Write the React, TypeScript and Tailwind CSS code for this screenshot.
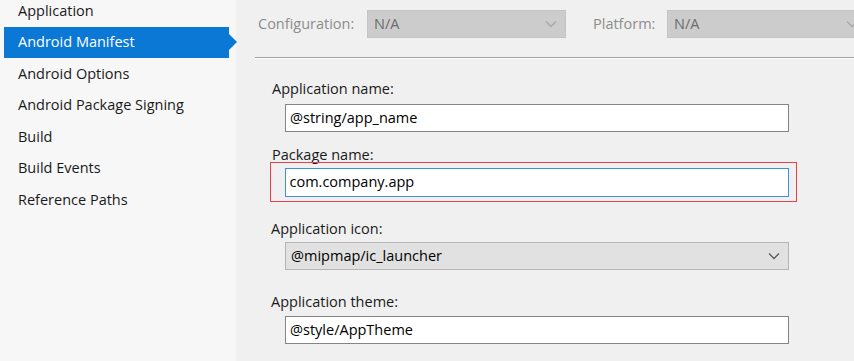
import React from "react";

const font = { fontFamily: '"Open Sans", "Noto Sans", sans-serif' };

function Chevron({ color }: { color: string }) {
  return (
    <svg width="12" height="8" viewBox="0 0 12 8" className="shrink-0">
      <path d="M1 1.5 L6 6.5 L11 1.5" fill="none" stroke={color} strokeWidth="1.3" />
    </svg>
  );
}

const items = [
  "Application",
  "Android Manifest",
  "Android Options",
  "Android Package Signing",
  "Build",
  "Build Events",
  "Reference Paths",
];

export default function App() {
  return (
    <div
      className="flex w-[854px] h-[361px] overflow-hidden bg-[#f0f0f0] text-[14.5px] text-[#1a1a1a]"
      style={font}
    >
      {/* Sidebar */}
      <div className="w-[236px] shrink-0 bg-[#f7f7f7] flex flex-col">
        <div className="-mt-[5px] flex flex-col">
          {items.map((it, i) =>
            i === 1 ? (
              <div key={it} className="relative h-[31.5px] ml-[4px] w-[225px]">
                <div className="h-full bg-[#0a78d4] text-white flex items-center pl-[14px]">
                  {it}
                </div>
                <div className="absolute right-[-8px] top-1/2 -translate-y-1/2 w-0 h-0 border-y-[8px] border-y-transparent border-l-[8px] border-l-[#0a78d4]" />
              </div>
            ) : (
              <div key={it} className="h-[31.5px] flex items-center pl-[18px]">
                {it}
              </div>
            )
          )}
        </div>
      </div>

      {/* Main panel */}
      <div className="flex-1 min-w-0 flex flex-col">
        <div className="pt-[10px] pl-[22px] flex items-center">
          <div className="w-[109px] shrink-0 text-[#8d8d8d]">Configuration:</div>
          <div className="w-[199px] h-[28px] shrink-0 bg-[#cccccc] border border-[#c4c4c4] flex items-center justify-between pl-[6px] pr-[8px] text-[#6d6d6d]">
            <span>N/A</span>
            <Chevron color="#a8a8a8" />
          </div>
          <div className="ml-[27px] w-[74px] shrink-0 text-[#8d8d8d]">Platform:</div>
          <div className="w-[200px] h-[28px] shrink-0 bg-[#cccccc] border border-[#c4c4c4] flex items-center justify-between pl-[6px] pr-[8px] text-[#6d6d6d]">
            <span>N/A</span>
            <Chevron color="#a8a8a8" />
          </div>
        </div>
        <div className="mt-[19px] ml-[19px] border-t border-t-[#a0a0a0] border-b border-b-[#ffffff]" />

        <div className="flex flex-col">
          <div className="mt-[20px] ml-[36px] h-[20px] leading-[20px]">Application name:</div>
          <div className="mt-[5px] ml-[49px] w-[504px] h-[28px] bg-white border-[1.5px] border-[#858585] flex items-center pl-[4px] text-black">
            @string/app_name
          </div>

          <div className="mt-[13px] ml-[36px] h-[17px] leading-[20px]">Package name:</div>
          <div className="ml-[34px] w-[527px] h-[40px] border-[1.5px] border-[#e8414b] pt-[4.5px] pl-[13.5px]">
            <div className="w-[504px] h-[29px] bg-white border-[1.5px] border-[#3d8fe0] flex items-center pl-[4px] text-black">
              com.company.app
            </div>
          </div>

          <div className="mt-[17px] ml-[35px] h-[20px] leading-[20px]">Application icon:</div>
          <div className="mt-[3px] ml-[49px] w-[504px] h-[28px] bg-[#e1e1e1] border-[1.5px] border-[#b4b4b4] flex items-center justify-between pl-[5px] pr-[8px] text-black">
            <span>@mipmap/ic_launcher</span>
            <Chevron color="#5a5a5a" />
          </div>

          <div className="mt-[22px] ml-[35px] h-[20px] leading-[20px]">Application theme:</div>
          <div className="mt-[4px] ml-[49px] w-[504px] h-[28px] bg-white border-[1.5px] border-[#858585] flex items-center pl-[4px] text-black">
            @style/AppTheme
          </div>
        </div>
      </div>
    </div>
  );
}
